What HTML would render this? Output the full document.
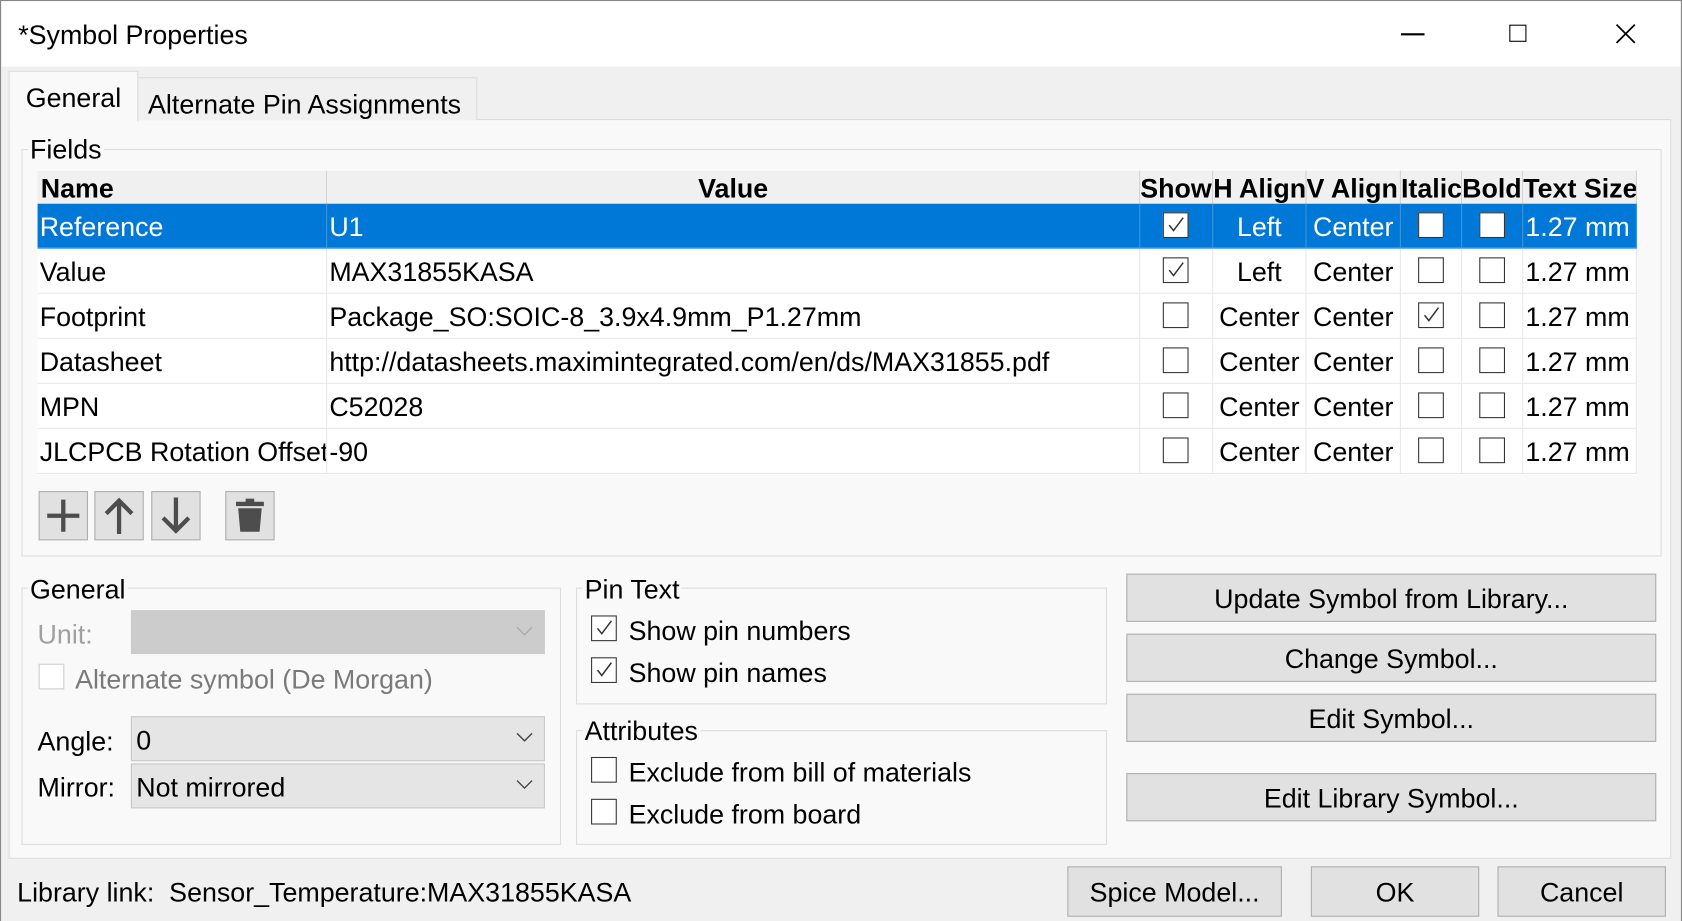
<!DOCTYPE html>
<html><head><meta charset="utf-8"><style>
html,body{margin:0;padding:0;width:1682px;height:921px;overflow:hidden;background:#f0f0f0}
#w{position:absolute;left:0;top:0;width:1568px;height:859px;transform:scale(1.0727,1.0722);transform-origin:0 0;font-family:"Liberation Sans",sans-serif;font-size:25px;color:#000;background:#f0f0f0}
.a{position:absolute}
.t{position:absolute;white-space:nowrap;line-height:1}
.cb{position:absolute;width:24px;height:24px;border:1.5px solid #333;background:#fff;box-sizing:border-box}
.cb svg{position:absolute;left:2px;top:2px}
.btn{position:absolute;background:#e1e1e1;border:1px solid #adadad;box-sizing:border-box;text-align:center}
.gb{position:absolute;border:1px solid #dcdcdc;box-sizing:border-box}
.gl{position:absolute;background:#f9f9f9;padding:0 2px;line-height:1;white-space:nowrap}
.cell{position:absolute;box-sizing:border-box;border-right:1px solid #e8e8e8;border-bottom:1px solid #e8e8e8;white-space:nowrap;overflow:hidden;line-height:44px}
.hd{position:absolute;box-sizing:border-box;border-right:1px solid #d0d0d0;background:#f0f0f0;font-weight:bold;white-space:nowrap;overflow:hidden;line-height:34px;height:31px;top:159px}
</style></head><body><div id="w">
<div class="a" style="left:0;top:0;width:1568px;height:62px;background:#fff;border:1px solid #888;box-sizing:border-box;border-bottom:none"></div>
<div class="t" style="left:17px;top:21px">*Symbol Properties</div>
<div class="a" style="left:1306px;top:31px;width:22px;height:1.5px;background:#000"></div>
<div class="a" style="left:1407px;top:23px;width:16px;height:16px;border:1.5px solid #000;box-sizing:border-box"></div>
<svg class="a" style="left:1506px;top:22px" width="19" height="19"><path d="M1 1L18 18M18 1L1 18" stroke="#000" stroke-width="1.6"/></svg>
<div class="a" style="left:8px;top:111px;width:1550px;height:690px;background:#f9f9f9;border:1px solid #dcdcdc;box-sizing:border-box"></div>
<div class="a" style="left:128px;top:72px;width:317px;height:40px;background:#f0f0f0;border:1px solid #dcdcdc;border-bottom:none;box-sizing:border-box"></div>
<div class="t" style="left:138px;top:86px">Alternate Pin Assignments</div>
<div class="a" style="left:8px;top:66px;width:121px;height:47px;background:#f9f9f9;border:1px solid #dcdcdc;border-bottom:none;box-sizing:border-box"></div>
<div class="t" style="left:24px;top:80px">General</div>
<div class="gb" style="left:20px;top:139px;width:1529px;height:380px"></div>
<div class="gl" style="left:26px;top:128px">Fields</div>
<div class="a" style="left:35px;top:158px;width:1491px;height:285px;background:#fff"></div>
<div class="hd" style="left:35px;width:270px;padding-left:3px">Name</div>
<div class="hd" style="left:305px;width:758px;text-align:center">Value</div>
<div class="hd" style="left:1063px;width:68px">Show</div>
<div class="hd" style="left:1131px;width:87px">H Align</div>
<div class="hd" style="left:1218px;width:88px">V Align</div>
<div class="hd" style="left:1306px;width:57px">Italic</div>
<div class="hd" style="left:1363px;width:57px">Bold</div>
<div class="hd" style="left:1420px;width:106px">Text Size</div>
<div class="a" style="left:35px;top:190px;width:1491px;height:41px;background:#0078d7"></div>
<div id="rows"></div>
<div class="btn" style="left:36px;top:458px;width:46px;height:46px"><svg width="44" height="44"><path d="M22 7V37M7 22H37" stroke="#4d4d4d" stroke-width="4"/></svg></div>
<div class="btn" style="left:88px;top:458px;width:46px;height:46px"><svg width="44" height="44"><path d="M22 9V39M10 20L22 8L34 20" stroke="#4d4d4d" stroke-width="4" fill="none"/></svg></div>
<div class="btn" style="left:141px;top:458px;width:46px;height:46px"><svg width="44" height="44"><path d="M22 5V35M10 24L22 36L34 24" stroke="#4d4d4d" stroke-width="4" fill="none"/></svg></div>
<div class="btn" style="left:210px;top:458px;width:46px;height:46px"><svg width="44" height="44"><path d="M9 9H35V13H9Z M18 6H26V9H18Z M11 15H33L31 37H13Z" fill="#4d4d4d"/></svg></div>
<div class="gb" style="left:20px;top:548px;width:503px;height:240px"></div>
<div class="gl" style="left:26px;top:538px">General</div>
<div class="t" style="left:35px;top:580px;color:#a0a0a0">Unit:</div>
<div class="a" style="left:122px;top:569px;width:386px;height:41px;background:#cccccc"></div>
<svg class="a" style="left:481px;top:584px" width="16" height="10"><path d="M1 1L8 8L15 1" stroke="#aaa" fill="none" stroke-width="1.3"/></svg>
<div class="a" style="left:36px;top:619px;width:24px;height:24px;border:1px solid #ccc;background:#fff;box-sizing:border-box"></div>
<div class="t" style="left:70px;top:622px;color:#7a7a7a">Alternate symbol (De Morgan)</div>
<div class="t" style="left:35px;top:680px">Angle:</div>
<div class="a" style="left:122px;top:668px;width:386px;height:42px;background:#e5e5e5;border:1px solid #c8c8c8;box-sizing:border-box"></div>
<div class="t" style="left:127px;top:679px">0</div>
<svg class="a" style="left:481px;top:683px" width="16" height="10"><path d="M1 1L8 8L15 1" stroke="#444" fill="none" stroke-width="1.3"/></svg>
<div class="t" style="left:35px;top:723px">Mirror:</div>
<div class="a" style="left:122px;top:712px;width:386px;height:42px;background:#e5e5e5;border:1px solid #c8c8c8;box-sizing:border-box"></div>
<div class="t" style="left:127px;top:723px">Not mirrored</div>
<svg class="a" style="left:481px;top:727px" width="16" height="10"><path d="M1 1L8 8L15 1" stroke="#444" fill="none" stroke-width="1.3"/></svg>
<div class="gb" style="left:537px;top:548px;width:495px;height:109px"></div>
<div class="gl" style="left:543px;top:538px">Pin Text</div>
<div class="cb" style="left:551px;top:574px"><svg width="18" height="18"><path d="M3 9L7 14L16 2" stroke="#333" fill="none" stroke-width="1.4"/></svg></div>
<div class="t" style="left:586px;top:577px">Show pin numbers</div>
<div class="cb" style="left:551px;top:613px"><svg width="18" height="18"><path d="M3 9L7 14L16 2" stroke="#333" fill="none" stroke-width="1.4"/></svg></div>
<div class="t" style="left:586px;top:616px">Show pin names</div>
<div class="gb" style="left:537px;top:681px;width:495px;height:107px"></div>
<div class="gl" style="left:543px;top:670px">Attributes</div>
<div class="cb" style="left:551px;top:706px"></div>
<div class="t" style="left:586px;top:709px">Exclude from bill of materials</div>
<div class="cb" style="left:551px;top:745px"></div>
<div class="t" style="left:586px;top:748px">Exclude from board</div>
<div class="btn" style="left:1050px;top:535px;width:494px;height:45px;line-height:46px">Update Symbol from Library...</div>
<div class="btn" style="left:1050px;top:591px;width:494px;height:45px;line-height:46px">Change Symbol...</div>
<div class="btn" style="left:1050px;top:647px;width:494px;height:45px;line-height:46px">Edit Symbol...</div>
<div class="btn" style="left:1050px;top:721px;width:494px;height:45px;line-height:46px">Edit Library Symbol...</div>
<div class="t" style="left:16px;top:821px">Library link:&nbsp; Sensor_Temperature:MAX31855KASA</div>
<div class="btn" style="left:995px;top:808px;width:200px;height:47px;line-height:48px">Spice Model...</div>
<div class="btn" style="left:1222px;top:808px;width:157px;height:47px;line-height:48px">OK</div>
<div class="btn" style="left:1396px;top:808px;width:157px;height:47px;line-height:48px">Cancel</div>
<div class="a" style="left:0;top:0;width:1px;height:859px;background:#888"></div>
<div class="a" style="left:1567px;top:0;width:1px;height:859px;background:#888"></div>
<script>
var rows=[["Reference","U1",1,"Left",0,0],["Value","MAX31855KASA",1,"Left",0,0],["Footprint","Package_SO:SOIC-8_3.9x4.9mm_P1.27mm",0,"Center",1,0],["Datasheet","http://datasheets.maximintegrated.com/en/ds/MAX31855.pdf",0,"Center",0,0],["MPN","C52028",0,"Center",0,0],["JLCPCB Rotation Offset","-90",0,"Center",0,0]];
var h="";
function cb(x,y,c){return '<div class="cb" style="left:'+x+'px;top:'+y+'px">'+(c?'<svg width="18" height="18"><path d="M3 9L7 14L16 2" stroke="#333" fill="none" stroke-width="1.4"/></svg>':'')+'</div>';}
rows.forEach(function(r,i){var y=190+i*42,sel=i==0,col=sel?"#fff":"#000",b=sel?"border-color:#3c94e0;":"";
function c(x,w,t,al){h+='<div class="cell" style="'+b+'left:'+x+'px;top:'+y+'px;width:'+w+'px;height:42px;color:'+col+';text-align:'+(al||'left')+';padding:0 2px">'+t+'</div>';}
c(35,270,r[0]);c(305,758,r[1]);c(1063,68,"");c(1131,87,r[3],"center");c(1218,88,"Center","center");c(1306,57,"");c(1363,57,"");c(1420,106,"1.27 mm");
h+=cb(1084,y+8,r[2])+cb(1322,y+8,r[4])+cb(1379,y+8,0);});
document.getElementById("rows").innerHTML=h;
</script>
</div></body></html>
